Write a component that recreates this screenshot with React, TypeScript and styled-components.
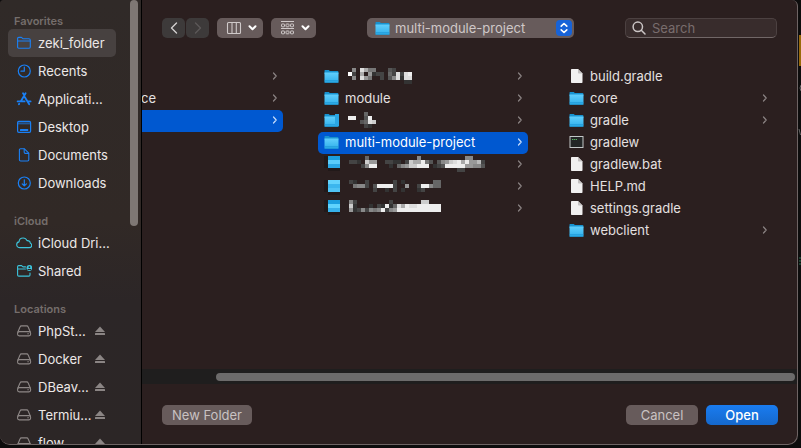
import React from "react";
import styled, { createGlobalStyle, css } from "styled-components";

const GlobalStyle = createGlobalStyle`
  * { box-sizing: border-box; }
  html, body { margin: 0; background: #0d0d0d; }
  body, button, input, select {
    font-family: Inter, "Liberation Sans", sans-serif;
    font-size: 13px;
    line-height: 16px;
  }
  button, input, select { margin: 0; padding: 0; border: 0; background: none; color: inherit; outline: none; }
  svg { display: block; flex: none; }
`;

const Desktop = styled.div`
  position: relative;
  display: flex;
  height: 100vh;
  padding: 0 3px 3px 0;
  overflow: hidden;
  background: #0d0d0d;
`;

const EditorEdge = styled.svg`
  position: absolute;
  top: 0;
  right: 0;
`;

const Dialog = styled.div`
  flex: 1;
  min-width: 0;
  display: flex;
  overflow: hidden;
  border: solid #6e6464;
  border-width: 0 1px 1px 0;
  border-radius: 4px 6px 10px 10px;
  background: #2b1f1f;
  color: #e6e2e2;
`;

const Sidebar = styled.aside`
  flex: none;
  width: 142px;
  display: flex;
  border-right: 1px solid #000;
  background: linear-gradient(#302a28, #312926 50%, #2c2627 68%, #2c2626);
`;

const Places = styled.nav`
  flex: 1;
  min-width: 0;
  display: flex;
  flex-direction: column;
  gap: 16px;
  padding: 13px 14px 0 8px;
  overflow: hidden;
`;

const Group = styled.section`
  flex: none;
`;

const GroupTitle = styled.h2`
  margin: 0;
  padding-left: 6px;
  font-size: 11px;
  font-weight: 600;
  line-height: 16px;
  color: #756e6c;
`;

const Place = styled.button<{ $active?: boolean }>`
  display: flex;
  align-items: center;
  gap: 6px;
  width: 100%;
  height: 28px;
  padding: 0 10px 0 8px;
  border-radius: 5px;
  text-align: left;
  color: #ece8e7;
  ${(p) => p.$active && css`background: #474140;`}
`;

const PlaceName = styled.span`
  flex: 1;
  min-width: 0;
  white-space: nowrap;
`;

const SideThumb = styled.div`
  flex: none;
  width: 8px;
  height: 51%;
  max-height: 226px;
  margin-right: 3px;
  border-radius: 4px;
  background: #7e7774;
`;

const Main = styled.main`
  flex: 1;
  min-width: 0;
  display: flex;
  flex-direction: column;
`;

const Toolbar = styled.header`
  display: flex;
  justify-content: space-between;
  padding: 18px 20px 28px;
`;

const ToolGroup = styled.div`
  display: flex;
  gap: 8px;
`;

const NavPair = styled.div`
  display: flex;
  gap: 1px;
`;

const NavButton = styled.button`
  display: grid;
  place-items: center;
  width: 23px;
  height: 20px;
  border-radius: 5px;
  background: #3d3a3a;
  color: #d2cfcf;
  &:disabled { color: #5c5858; }
`;

const ViewButton = styled.button<{ $compact?: boolean }>`
  display: flex;
  align-items: center;
  justify-content: space-between;
  width: ${(p) => (p.$compact ? 45 : 46)}px;
  height: 20px;
  padding: 0 6px 0 9px;
  border-radius: 5px;
  background: #675b5b;
  color: #cfc9c9;
`;

const PathPicker = styled.label`
  position: relative;
  display: flex;
  align-items: center;
  gap: 5px;
  width: 207px;
  height: 20px;
  padding: 0 2px 0 8px;
  border-radius: 5px;
  background: #675b5b;
  color: #cfc8c8;
`;

const PathSelect = styled.select`
  flex: 1;
  min-width: 0;
  appearance: none;
`;

const Stepper = styled.span`
  display: grid;
  place-items: center;
  width: 16px;
  height: 16px;
  border-radius: 4px;
  background: #1763d8;
  color: #fff;
  pointer-events: none;
`;

const SearchBox = styled.label`
  display: flex;
  align-items: center;
  gap: 6px;
  width: 152px;
  height: 20px;
  padding: 0 6px;
  border: 1px solid #4c4141;
  border-bottom-color: #716767;
  border-radius: 5px;
  background: #382c2c;
  color: #cbc5c5;
`;

const SearchInput = styled.input`
  flex: 1;
  min-width: 0;
  &::placeholder { color: #786d6d; opacity: 1; }
`;

const Columns = styled.div`
  flex: 1;
  min-height: 0;
  display: flex;
  overflow: hidden;
`;

const Column = styled.div<{ $scrolled?: boolean }>`
  flex: none;
  display: flex;
  flex-direction: column;
  align-items: flex-end;
  width: ${(p) => (p.$scrolled ? 166 : 245)}px;
  padding-right: 25px;
  overflow: hidden;
`;

const Entry = styled.button<{ $selected?: boolean }>`
  flex: none;
  display: flex;
  align-items: center;
  gap: 6px;
  width: 210px;
  height: 22px;
  padding: 0 5px 2px 6px;
  border-radius: 5px;
  text-align: left;
  color: ${(p) => (p.$selected ? "#fff" : "#e4e0e0")};
  background: ${(p) => (p.$selected ? "#0058d0" : "transparent")};
`;

const EntryName = styled.span`
  flex: 1;
  white-space: nowrap;
`;

const TrailingName = styled.span`
  flex: 1;
  padding-right: 110px;
  text-align: right;
`;

const Chevron = styled.svg<{ $bright?: boolean }>`
  color: ${(p) => (p.$bright ? "#c6dcfa" : "#8b8383")};
`;

const ScrollTrack = styled.div`
  flex: none;
  height: 15px;
  padding: 4px 2px 3px 74px;
  background: #1f1e1e;
`;

const ScrollThumb = styled.div`
  height: 8px;
  border-radius: 4px;
  background: #6c6b6b;
`;

const Footer = styled.footer`
  display: flex;
  gap: 8px;
  padding: 21px 19px 19px 20px;
`;

const PushButton = styled.button<{ $primary?: boolean; $wide?: boolean }>`
  width: ${(p) => (p.$wide ? 90 : 72)}px;
  height: 20px;
  border-radius: 5px;
  color: ${(p) => (p.$primary ? "#fff" : "#c9c2c2")};
  font-weight: ${(p) => (p.$primary ? 500 : 400)};
  background: ${(p) => (p.$primary ? "linear-gradient(#1a7cf0, #1568cc)" : "#675b5b")};
  &:first-child { margin-right: auto; }
`;

/* ---------- icons ---------- */

const BLUE = "#1a80f5";
const CYAN = "#3cc4dc";

const line = { fill: "none", strokeLinecap: "round", strokeLinejoin: "round" } as const;

type PlaceKind =
  | "folder" | "clock" | "apps" | "desktop" | "document" | "download" | "cloud" | "shared" | "drive";

const placeDrawings: Record<PlaceKind, React.ReactNode> = {
  folder: (
    <g {...line} stroke={BLUE} strokeWidth="1.1">
      <path d="M1.6 12V3.6c0-.8.4-1.2 1.2-1.2h2.6l1.5 1.3h6c.9 0 1.4.4 1.4 1.2V12c0 .8-.4 1.2-1.2 1.2H2.8c-.8 0-1.2-.4-1.2-1.2Z" />
      <path d="M1.6 6h12.7" />
    </g>
  ),
  clock: (
    <g {...line} stroke={BLUE} strokeWidth="1.2">
      <circle cx="8.3" cy="8" r="6" />
      <path d="M8.3 4v4.2H5" />
    </g>
  ),
  apps: (
    <g {...line} stroke={BLUE} strokeWidth="1.8">
      <path d="M7 2.2l1.3 2.2M9.6 2.2L5 10M8.6 5.8l4.6 7.4M1.6 10.4h7M12.2 10.4h2.4M3.2 12.8l-.3.5" />
    </g>
  ),
  desktop: (
    <g>
      <rect x="1.6" y="2.4" width="13" height="11" rx="1.3" fill="none" stroke={BLUE} strokeWidth="1.2" />
      <path d="M2 4.4h12.2" stroke={BLUE} strokeWidth="2" opacity=".55" />
      <rect x="4" y="10" width="8.2" height="2" rx=".6" fill={BLUE} />
    </g>
  ),
  document: (
    <g {...line} stroke={BLUE} strokeWidth="1.1">
      <path d="M3.4 3c0-.8.4-1.2 1.2-1.2h3.8l4.4 4.4v6.6c0 .8-.4 1.2-1.2 1.2h-7c-.8 0-1.2-.4-1.2-1.2Z" />
      <path d="M8.2 2v3.2c0 .8.3 1.2 1.1 1.2h3.2" />
    </g>
  ),
  download: (
    <g {...line} stroke={BLUE} strokeWidth="1.2">
      <circle cx="8.3" cy="8" r="6" />
      <path d="M8.3 4.8v6M6.2 8.8l2.1 2.1 2.1-2.1" />
    </g>
  ),
  cloud: (
    <path
      {...line}
      stroke={CYAN}
      strokeWidth="1.1"
      d="M4 12.6c-1.9 0-3.3-1.2-3.3-2.9 0-1.5 1-2.6 2.3-2.8C3.2 4.600 5 3 7.100 3c1.900 0 3.200 1 3.900 2.600 2.100-.2 3.300 1.100 3.300 2.700 1 .3 1.400 1 1.400 1.900 0 1.400-1.100 2.400-2.600 2.400Z"
    />
  ),
  shared: (
    <g {...line} stroke={CYAN} strokeWidth="1.1">
      <path d="M9.5 3.9H7L5.6 2.6H2.7c-.7 0-1.1.4-1.1 1.1v8.2c0 .8.4 1.2 1.2 1.2h10c.8 0 1.2-.4 1.2-1.2V10M1.6 6h7.8" />
      <circle cx="13.4" cy="5" r="2.9" fill={CYAN} stroke="none" />
      <circle cx="13.4" cy="4.2" r=".9" fill="#2c2626" stroke="none" />
      <path d="M12 6.5h2.8" stroke="#2c2626" />
    </g>
  ),
  drive: (
    <g {...line} stroke="#8d8786" strokeWidth="1.1">
      <path d="M1.8 9.3L4 4c.3-.8.8-1.1 1.5-1.1h5.2c.7 0 1.2.3 1.5 1.1l2.2 5.3" />
      <rect x="1.6" y="8.6" width="13" height="4.3" rx="1.6" />
      <path d="M11.8 10.8h.6" />
    </g>
  ),
};

const PlaceIcon = ({ kind }: { kind: PlaceKind }) => (
  <svg width="16" height="16" viewBox="0 0 16 16" aria-hidden="true">{placeDrawings[kind]}</svg>
);

const EjectIcon = () => (
  <svg width="12" height="10" viewBox="0 0 12 10" fill="#8b8584" aria-hidden="true">
    <path d="M6 .6L11 6H1Z" />
    <rect x="1" y="7" width="10" height="2" rx=".5" />
  </svg>
);

const FolderIcon = ({ patch }: { patch?: boolean }) => (
  <svg width="15" height="15" viewBox="0 0 15 15" aria-hidden="true">
    <defs>
      <linearGradient id="folderFront" x1="0" y1="0" x2="0" y2="1">
        <stop offset="0" stopColor="#62cffc" />
        <stop offset="1" stopColor="#2fafea" />
      </linearGradient>
    </defs>
    <path d="M.5 1.6c0-.5.2-.7.7-.7h3.6l1 1h7.8c.5 0 .8.3.8.8V5H.5Z" fill="#1792cf" />
    <path d="M.5 3.4h14v9.6c0 .5-.3.7-.8.7H1.3c-.5 0-.8-.2-.8-.7Z" fill="url(#folderFront)" />
    <path d="M.5 11.7h14M.5 13.3h14" stroke="#1a94d3" strokeWidth=".7" />
    {patch && <path d="M11 1h4v12h-4Z" fill="#2ba6e3" />}
  </svg>
);

const FileIcon = () => (
  <svg width="15" height="16" viewBox="0 0 15 16" aria-hidden="true">
    <path d="M2 2c0-.7.3-1 1-1h6l4.5 4.5V14c0 .7-.3 1-1 1H3c-.7 0-1-.3-1-1Z" fill="#f1f0f0" />
    <path d="M9 1l4.5 4.5H10c-.7 0-1-.3-1-1Z" fill="#c4c1c1" />
  </svg>
);

const TerminalIcon = () => (
  <svg width="15" height="14" viewBox="0 0 15 14" aria-hidden="true">
    <rect x="1" y="1.5" width="13" height="11" fill="#232626" stroke="#c3c8c8" />
    <path d="M3 4.5h5" stroke="#58b060" strokeDasharray="1.4 .5" />
  </svg>
);

const PixelFolder = ({ tones, top }: { tones: string[]; top: number }) => (
  <svg width="16" height="22" viewBox="0 -1 16 22" shapeRendering="crispEdges" aria-hidden="true">
    <rect x="0" y={top} width="4" height="12" fill="#211919" />
    <rect x="4" y={top + 12} width="12" height="3" fill="#211919" />
    {tones.map((tone, i) => (
      <rect key={i} x="4" y={top + i * 4} width="12" height="4" fill={tone} />
    ))}
  </svg>
);

/* Each character is the brightness of one 4px cell; a dot leaves it empty. */
const Mosaic = ({ cells, top }: { cells: string[]; top: number }) => (
  <svg width="150" height="22" viewBox="0 -1 150 22" shapeRendering="crispEdges" role="img" aria-label="Hidden name">
    {cells.flatMap((row, y) =>
      [...row].map((c, x) =>
        c === "." ? null : (
          <rect key={`${x}-${y}`} x={3 + x * 4} y={top + y * 4} width="4" height="4" fill={`#${c}${c}${c}`} />
        )
      )
    )}
  </svg>
);

const RowChevron = ({ bright }: { bright?: boolean }) => (
  <Chevron $bright={bright} width="6" height="8" viewBox="0 0 6 8" aria-hidden="true">
    <path d="M1.5 1L4.200 4L1.5 7" {...line} stroke="currentColor" strokeWidth="1.2" />
  </Chevron>
);

const NavArrow = ({ d }: { d: string }) => (
  <svg width="10" height="14" viewBox="0 0 10 14" aria-hidden="true">
    <path d={d} {...line} stroke="currentColor" strokeWidth="1.4" />
  </svg>
);

const DownArrow = () => (
  <svg width="9" height="6" viewBox="0 0 9 6" aria-hidden="true">
    <path d="M1.5 1.3l3 3 3-3" {...line} stroke="#fff" strokeWidth="2" />
  </svg>
);

const ColumnsIcon = () => (
  <svg width="16" height="14" viewBox="0 0 16 14" aria-hidden="true">
    <g {...line} stroke="currentColor" strokeWidth="1.1">
      <rect x="1.5" y="1.5" width="13" height="11" rx="1" />
      <path d="M6 1.5v11M10.3 1.5v11" />
    </g>
  </svg>
);

const GroupIcon = () => (
  <svg width="15" height="16" viewBox="0 0 15 16" aria-hidden="true">
    <g fill="none" stroke="currentColor" strokeWidth="1">
      <path d="M1 1.5h13M1 8.5h13" />
      {[4, 11].map((y) =>
        [1.5, 6, 10.5].map((x) => <rect key={`${x}-${y}`} x={x} y={y} width="3" height="2.8" rx=".6" />)
      )}
    </g>
  </svg>
);

/* ---------- data ---------- */

interface PlaceItem { name: string; kind: PlaceKind; active?: boolean; eject?: boolean }

const groups: { title: string; items: PlaceItem[] }[] = [
  {
    title: "Favorites",
    items: [
      { name: "zeki_folder", kind: "folder", active: true },
      { name: "Recents", kind: "clock" },
      { name: "Applicati...", kind: "apps" },
      { name: "Desktop", kind: "desktop" },
      { name: "Documents", kind: "document" },
      { name: "Downloads", kind: "download" },
    ],
  },
  {
    title: "iCloud",
    items: [
      { name: "iCloud Dri...", kind: "cloud" },
      { name: "Shared", kind: "shared" },
    ],
  },
  {
    title: "Locations",
    items: ["PhpSt...", "Docker", "DBeav...", "Termiu...", "flow"].map((name) => ({
      name,
      kind: "drive" as const,
      eject: true,
    })),
  },
];

interface EntryItem {
  name?: string;
  type: "folder" | "patched" | "pixel" | "file" | "terminal";
  selected?: boolean;
  cells?: string[];
  tones?: string[];
  top?: number;
}

const middle: EntryItem[] = [
  { type: "folder", top: 2, cells: [".8.da77...54....", "f4.a.9344.64d4de", ".8.d97..4.58d3dd", "..............33"] },
  { type: "folder", name: "module" },
  { type: "patched", top: 2, cells: ["....6..", "ee..5e.", "...56dc", "....43."] },
  { type: "folder", name: "multi-module-project", selected: true },
  {
    type: "pixel",
    top: 2,
    tones: ["#1b9fdf", "#5accfb", "#2ba8e6"],
    cells: [
      "....6............8...........88...",
      "443.c99..4433.4caae75.589cdeae99b4",
      "...48ee...3.689cceee.345eeeee99885",
      "...........................44.....",
    ],
  },
  {
    type: "pixel",
    top: 4,
    tones: ["#62d2fc", "#3bb6ee", "#4fc3f4"],
    cells: ["43..4......4.3.......66", ".7884.5eeee4..9..4ee866", "......4..3.4.3...34...."],
  },
  {
    type: "pixel",
    top: 2,
    tones: ["#1b9fdf", "#5fd3fd", "#36b1ea"],
    cells: ["84........4.......cc...", "c3...3.43e36daeddeeeeee", "93484878e489eeeeeeeeeee"],
  },
];

const right: EntryItem[] = [
  { type: "file", name: "build.gradle" },
  { type: "folder", name: "core" },
  { type: "folder", name: "gradle" },
  { type: "terminal", name: "gradlew" },
  { type: "file", name: "gradlew.bat" },
  { type: "file", name: "HELP.md" },
  { type: "file", name: "settings.gradle" },
  { type: "folder", name: "webclient" },
];

const EntryIcon = ({ item }: { item: EntryItem }) => {
  switch (item.type) {
    case "file": return <FileIcon />;
    case "terminal": return <TerminalIcon />;
    case "pixel": return <PixelFolder tones={item.tones ?? []} top={item.top ?? 0} />;
    default: return <FolderIcon patch={item.type === "patched"} />;
  }
};

const EntryRow = ({ item }: { item: EntryItem }) => (
  <Entry $selected={item.selected}>
    <EntryIcon item={item} />
    <EntryName>{item.name ?? <Mosaic cells={item.cells ?? []} top={item.top ?? 0} />}</EntryName>
    {item.type !== "file" && item.type !== "terminal" && <RowChevron bright={item.selected} />}
  </Entry>
);

export default function App() {
  return (
    <Desktop>
      <GlobalStyle />
      <EditorEdge width="3" height="448" viewBox="0 0 3 448" aria-hidden="true">
        <path d="M1 35h2v31H1Z" fill="#9a6a0a" />
        <path d="M3 85q-2 3 0 6M1 129l1.5 6" stroke="#666" fill="none" />
        <path d="M1 258h2M1 261h2M1 264h2" stroke="#2f7355" />
      </EditorEdge>
      <Dialog role="dialog" aria-label="Open">
        <Sidebar>
          <Places aria-label="Places">
            {groups.map((group) => (
              <Group key={group.title}>
                <GroupTitle>{group.title}</GroupTitle>
                {group.items.map((item) => (
                  <Place key={item.name} $active={item.active}>
                    <PlaceIcon kind={item.kind} />
                    <PlaceName>{item.name}</PlaceName>
                    {item.eject && <EjectIcon />}
                  </Place>
                ))}
              </Group>
            ))}
          </Places>
          <SideThumb />
        </Sidebar>
        <Main>
          <Toolbar>
            <ToolGroup>
              <NavPair>
                <NavButton aria-label="Back"><NavArrow d="M7.5 2L2.5 7l5 5" /></NavButton>
                <NavButton aria-label="Forward" disabled><NavArrow d="M2.5 2l5 5-5 5" /></NavButton>
              </NavPair>
              <ViewButton aria-label="Column view"><ColumnsIcon /><DownArrow /></ViewButton>
              <ViewButton $compact aria-label="Group items"><GroupIcon /><DownArrow /></ViewButton>
            </ToolGroup>
            <PathPicker>
              <FolderIcon />
              <PathSelect aria-label="Location" defaultValue="multi-module-project">
                <option>multi-module-project</option>
              </PathSelect>
              <Stepper>
                <svg width="8" height="12" viewBox="0 0 8 12" aria-hidden="true">
                  <path d="M1.2 4.2L4 1.5l2.8 2.7M1.2 7.8L4 10.5l2.8-2.7" {...line} stroke="currentColor" strokeWidth="1.6" />
                </svg>
              </Stepper>
            </PathPicker>
            <SearchBox>
              <svg width="14" height="14" viewBox="0 0 14 14" aria-hidden="true">
                <g {...line} stroke="currentColor" strokeWidth="1.5">
                  <circle cx="5.8" cy="5.8" r="4.7" />
                  <path d="M9.3 9.3l3.7 3.7" />
                </g>
              </svg>
              <SearchInput type="text" placeholder="Search" aria-label="Search" />
            </SearchBox>
          </Toolbar>
          <Columns>
            <Column $scrolled>
              <Entry><EntryName /><RowChevron /></Entry>
              <Entry><TrailingName>ce</TrailingName><RowChevron /></Entry>
              <Entry $selected><EntryName /><RowChevron bright /></Entry>
            </Column>
            <Column>{middle.map((item, i) => <EntryRow key={i} item={item} />)}</Column>
            <Column>{right.map((item) => <EntryRow key={item.name} item={item} />)}</Column>
          </Columns>
          <ScrollTrack><ScrollThumb /></ScrollTrack>
          <Footer>
            <PushButton $wide>New Folder</PushButton>
            <PushButton>Cancel</PushButton>
            <PushButton $primary>Open</PushButton>
          </Footer>
        </Main>
      </Dialog>
    </Desktop>
  );
}
